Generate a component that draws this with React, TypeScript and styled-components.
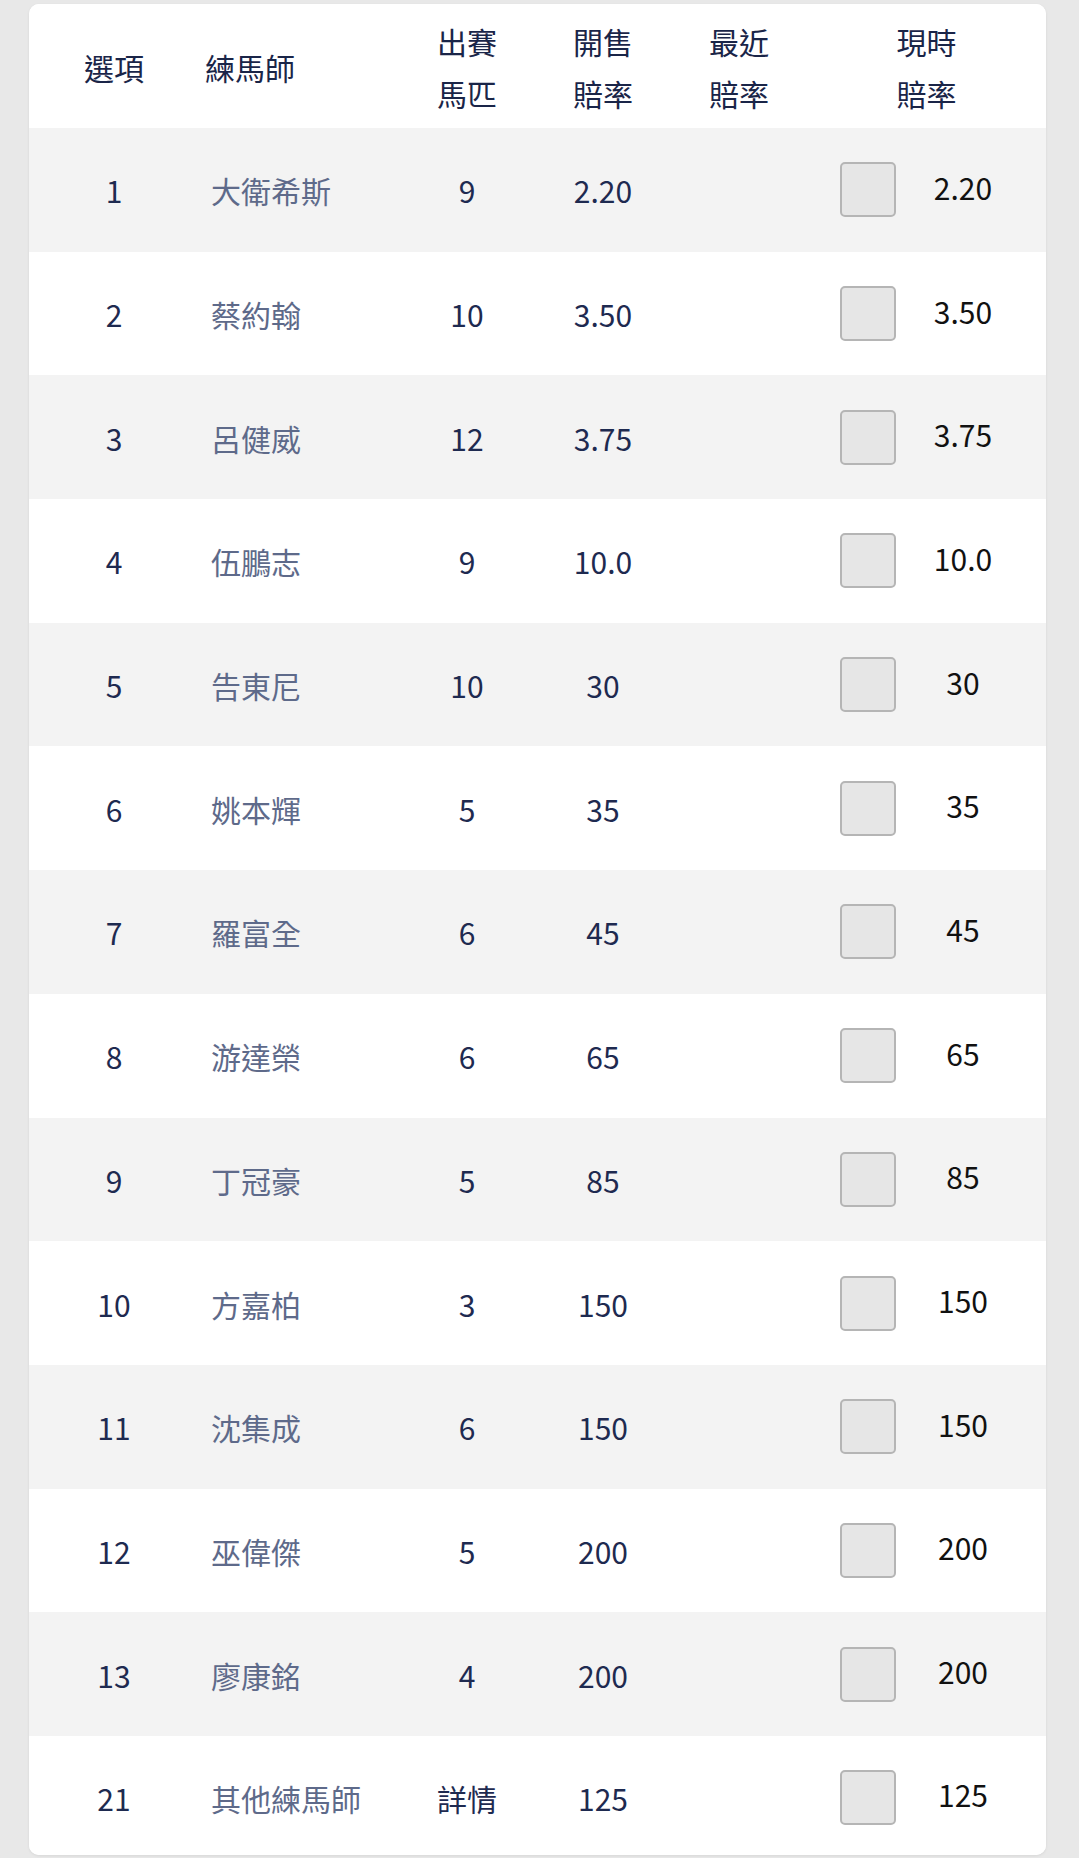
import React from "react";
import styled, { createGlobalStyle } from "styled-components";

const GlobalStyle = createGlobalStyle`
  html, body {
    margin: 0;
    padding: 0;
    background: #e8e8e8;
  }
  body {
    font-family: "Noto Sans CJK TC", "Noto Sans", sans-serif;
  }
`;

const Page = styled.div`
  padding: 4px 33px 0 29px;
  min-height: 1858px;
  box-sizing: border-box;
  background: #e8e8e8;
`;

const Card = styled.div`
  width: 1017px;
  background: #ffffff;
  border-radius: 10px;
  overflow: hidden;
  box-shadow: 0 1px 3px rgba(0, 0, 0, 0.08);
`;

const COLS = "170px 200px 136px 136px 136px 239px";

const HeaderRow = styled.div`
  display: grid;
  grid-template-columns: ${COLS};
  height: 124px;
  padding-top: 1px;
  box-sizing: border-box;
  align-items: center;
  background: #ffffff;
`;

const HeadCell = styled.div<{ $align?: "left" | "center"; $indent?: number }>`
  font-size: 30px;
  line-height: 52px;
  font-weight: 400;
  color: #1a2548;
  text-align: ${(p) => p.$align ?? "center"};
  padding-left: ${(p) => p.$indent ?? 0}px;
`;

const Row = styled.div<{ $shaded: boolean; $last?: boolean }>`
  display: grid;
  grid-template-columns: ${COLS};
  height: ${(p) => (p.$last ? "119px" : "123.7px")};
  padding-top: ${(p) => (p.$last ? "4px" : "0")};
  box-sizing: border-box;
  align-items: center;
  background: ${(p) => (p.$shaded ? "#f3f3f3" : "#ffffff")};
`;

const NumCell = styled.div`
  font-size: 30px;
  line-height: 40px;
  color: #1e2a50;
  text-align: center;
  padding-top: 1px;
`;

const NameCell = styled.div`
  font-size: 30px;
  line-height: 40px;
  color: #5e6a8a;
  padding-left: 12px;
  padding-top: 1px;
`;

const OddsCell = styled.div`
  display: flex;
  align-items: center;
  padding-left: 33px;
  gap: 17px;
`;

const Box = styled.div`
  width: 56px;
  height: 55px;
  box-sizing: border-box;
  border: 2px solid #b5b5b5;
  border-radius: 5px;
  background: #e6e6e6;
  flex: none;
`;

const Current = styled.span`
  width: 100px;
  text-align: center;
  font-size: 30px;
  line-height: 40px;
  font-weight: 400;
  color: #111111;
  padding-bottom: 6px;
`;

type Entry = {
  no: string;
  name: string;
  runners: string;
  open: string;
  recent: string;
  now: string;
};

const DATA: Entry[] = [
  { no: "1", name: "大衛希斯", runners: "9", open: "2.20", recent: "", now: "2.20" },
  { no: "2", name: "蔡約翰", runners: "10", open: "3.50", recent: "", now: "3.50" },
  { no: "3", name: "呂健威", runners: "12", open: "3.75", recent: "", now: "3.75" },
  { no: "4", name: "伍鵬志", runners: "9", open: "10.0", recent: "", now: "10.0" },
  { no: "5", name: "告東尼", runners: "10", open: "30", recent: "", now: "30" },
  { no: "6", name: "姚本輝", runners: "5", open: "35", recent: "", now: "35" },
  { no: "7", name: "羅富全", runners: "6", open: "45", recent: "", now: "45" },
  { no: "8", name: "游達榮", runners: "6", open: "65", recent: "", now: "65" },
  { no: "9", name: "丁冠豪", runners: "5", open: "85", recent: "", now: "85" },
  { no: "10", name: "方嘉柏", runners: "3", open: "150", recent: "", now: "150" },
  { no: "11", name: "沈集成", runners: "6", open: "150", recent: "", now: "150" },
  { no: "12", name: "巫偉傑", runners: "5", open: "200", recent: "", now: "200" },
  { no: "13", name: "廖康銘", runners: "4", open: "200", recent: "", now: "200" },
  { no: "21", name: "其他練馬師", runners: "詳情", open: "125", recent: "", now: "125" },
];

export default function App() {
  return (
    <>
      <GlobalStyle />
      <Page>
        <Card>
          <HeaderRow>
            <HeadCell>選項</HeadCell>
            <HeadCell $align="left" $indent={6}>練馬師</HeadCell>
            <HeadCell>出賽<br />馬匹</HeadCell>
            <HeadCell>開售<br />賠率</HeadCell>
            <HeadCell>最近<br />賠率</HeadCell>
            <HeadCell>現時<br />賠率</HeadCell>
          </HeaderRow>
          {DATA.map((d, i) => (
            <Row key={d.no} $shaded={i % 2 === 0} $last={i === DATA.length - 1}>
              <NumCell>{d.no}</NumCell>
              <NameCell>{d.name}</NameCell>
              <NumCell>{d.runners}</NumCell>
              <NumCell>{d.open}</NumCell>
              <NumCell>{d.recent}</NumCell>
              <OddsCell>
                <Box />
                <Current>{d.now}</Current>
              </OddsCell>
            </Row>
          ))}
        </Card>
      </Page>
    </>
  );
}
